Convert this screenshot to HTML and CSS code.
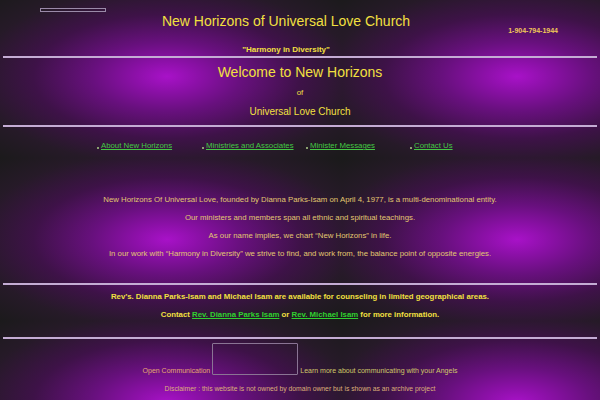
FILE: index.html
```html
<!DOCTYPE html>
<html>
<head>
<meta charset="utf-8">
<link rel="stylesheet" href="styles.css">
</head>
<body>
<div class="page">
  <div class="header">
    <div class="logo-slot"><span class="logo-box"></span></div>
    <div class="title">New Horizons of Universal Love Church</div>
    <div class="phone">1-904-794-1944</div>
  </div>
  <div class="motto">"Harmony in Diversity"</div>
  <hr class="rule rule-a">
  <div class="welcome">Welcome to New Horizons</div>
  <div class="of">of</div>
  <div class="church">Universal Love Church</div>
  <hr class="rule rule-b">
  <nav class="nav">
    <div class="nav-item"><span class="bullet"></span><a href="#">About New Horizons</a></div>
    <div class="nav-item"><span class="bullet"></span><a href="#">Ministries and Associates</a></div>
    <div class="nav-item"><span class="bullet"></span><a href="#">Minister Messages</a></div>
    <div class="nav-item"><span class="bullet"></span><a href="#">Contact Us</a></div>
  </nav>
  <div class="intro">
    <p>New Horizons Of Universal Love, founded by Dianna Parks-Isam on April 4, 1977, is a multi-denominational entity.</p>
    <p>Our ministers and members span all ethnic and spiritual teachings.</p>
    <p>As our name implies, we chart “New Horizons” in life.</p>
    <p>In our work with “Harmony in Diversity” we strive to find, and work from, the balance point of opposite energies.</p>
  </div>
  <hr class="rule rule-c">
  <div class="counsel">
    <p>Rev’s. Dianna Parks-Isam and Michael Isam are available for counseling in limited geographical areas.</p>
    <p>Contact <a href="#">Rev. Dianna Parks Isam</a> or <a href="#">Rev. Michael Isam</a> for more information.</p>
  </div>
  <hr class="rule rule-d">
  <div class="comm">
    <span class="comm-left">Open Communication</span>
    <span class="comm-box"></span>
    <span class="comm-right">Learn more about communicating with your Angels</span>
  </div>
  <div class="disclaimer">Disclaimer : this website is not owned by domain owner but is shown as an archive project</div>
</div>
</body>
</html>
```
FILE: styles.css
```css
html, body {
  margin: 0;
  padding: 0;
}
body {
  width: 600px;
  height: 400px;
  overflow: hidden;
  background-color: #1a1a1a;
  background-image: radial-gradient(ellipse farthest-corner at center,
    #a812c8 0%, #8c10a8 13%, #68107e 30%, #3e1248 54%, #261a28 77%, #1a1a1a 100%);
  background-size: 350px 163px;
  background-position: -8px -5px;
  font-family: "Liberation Sans", Arial, sans-serif;
  color: #dcc070;
}
.page {
  padding: 0 3px;
}
.header {
  display: grid;
  grid-template-columns: 150px 266px 1fr;
  height: 45px;
}
.logo-slot {
  padding: 8px 0 0 37px;
}
.logo-box {
  display: block;
  width: 64px;
  height: 2px;
  border: 1px solid #9a8aa8;
}
.title {
  padding-top: 12px;
  font-size: 14px;
  line-height: 18px;
  color: #f2e040;
  text-align: center;
  white-space: nowrap;
}
.phone {
  padding-top: 26px;
  padding-right: 39px;
  text-align: right;
  font-size: 7px;
  line-height: 9px;
  font-weight: bold;
  color: #f0c858;
}
.motto {
  margin-left: 150px;
  width: 266px;
  text-align: center;
  font-size: 8px;
  line-height: 10px;
  font-weight: bold;
  color: #f2e040;
}
.rule {
  margin: 0;
  height: 0;
  border: 0;
  border-top: 2px solid #c4acd4;
}
.rule-a { margin-top: 1px; }
.welcome {
  margin-top: 6px;
  text-align: center;
  font-size: 14px;
  line-height: 16px;
  color: #f2e040;
}
.of {
  margin-top: 8px;
  text-align: center;
  font-size: 7.8px;
  line-height: 10px;
  color: #f2e040;
}
.church {
  margin-top: 8px;
  text-align: center;
  font-size: 10px;
  line-height: 12px;
  color: #f2e040;
}
.rule-b { margin-top: 7px; }
.nav {
  display: grid;
  grid-template-columns: 105px 104px 104px 104px;
  margin: 14px 0 0 94px;
  font-size: 7.8px;
  line-height: 10px;
}
.nav-item {
  display: flex;
  align-items: center;
  gap: 2px;
}
.bullet {
  display: inline-block;
  width: 2px;
  height: 2px;
  margin-top: 3px;
  background: #8aa070;
}
a {
  color: #3cc83c;
  text-decoration: underline;
}
.nav a { color: #44c844; }
.intro {
  margin-top: 44px;
  text-align: center;
  font-size: 7.8px;
  line-height: 10px;
  color: #e2c870;
}
.intro p {
  margin: 0 0 8px;
}
.intro p:last-child { margin-bottom: 0; }
.rule-c { margin-top: 24px; }
.counsel {
  margin-top: 7px;
  text-align: center;
  font-size: 7.8px;
  line-height: 10px;
  font-weight: bold;
  color: #f2e040;
}
.counsel p { margin: 0 0 8px; }
.counsel p:last-child { margin-bottom: 0; }
.counsel a { color: #30d030; }
.rule-d { margin-top: 17px; }
.comm {
  display: flex;
  justify-content: center;
  align-items: flex-end;
  gap: 2px;
  margin-top: 4px;
  font-size: 7px;
  line-height: 9px;
}
.comm-left { color: #e6a870; }
.comm-right { color: #d0c868; }
.comm-box {
  display: block;
  width: 84px;
  height: 30px;
  border: 1px solid #8a7494;
  border-radius: 1px;
}
.disclaimer {
  margin-top: 9px;
  text-align: center;
  font-size: 6.8px;
  line-height: 10px;
  color: #dcb078;
}
```
